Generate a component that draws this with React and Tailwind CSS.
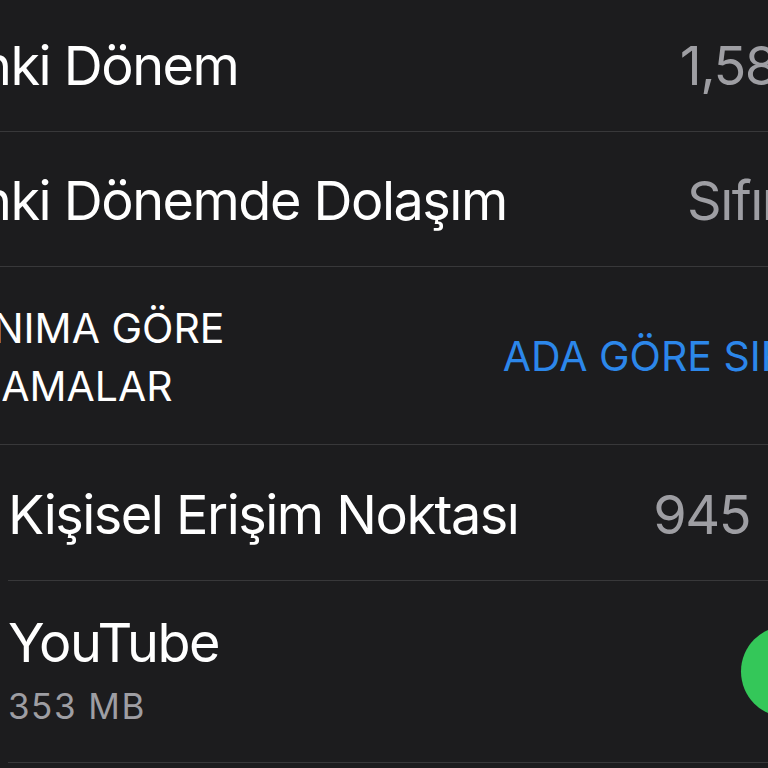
import React from "react";

const font = { fontFamily: "Inter, 'Noto Sans', sans-serif" };

// Satır: başlık solda, değer sağda
const ValueRow = ({ label, value }) => (
  <div className="flex h-[135px] items-center justify-between border-b border-[#38383a] pt-[4px] pr-[37px] whitespace-nowrap">
    <span className="pl-[67px] text-[54px] leading-none tracking-[-1.5px] text-white">{label}</span>
    <span className="text-[54px] leading-none tracking-[-1.5px] text-[#9e9ea3]">{value}</span>
  </div>
);

export default function App() {
  return (
    <div className="w-[768px] h-[768px] overflow-hidden bg-[#1c1c1e]" style={font}>
      <div className="-mt-[3px] -ml-[200px] w-[1100px]">
        <ValueRow label="Şu Anki Dönem" value="1,58 GB" />
        <ValueRow label="Şu Anki Dönemde Dolaşım" value="Sıfır KB" />

        {/* Bölüm başlığı */}
        <div className="flex h-[178px] items-center justify-between border-b border-[#38383a] pt-[2px] pr-[33px] whitespace-nowrap">
          <div className="pl-[60px] text-[41px] leading-[58px] text-white">
            <div>KULLANIMA GÖRE</div>
            <div>UYGULAMALAR</div>
          </div>
          <span className="text-[41px] leading-none text-[#2c87ea]">ADA GÖRE SIRALA</span>
        </div>

        {/* Uygulamalar */}
        <div className="pl-[208px] whitespace-nowrap">
          <div className="flex h-[136px] items-center border-b border-[#38383a] pt-[4px]">
            <span className="text-[54px] leading-none tracking-[-1.5px] text-white">Kişisel Erişim Noktası</span>
            <span className="ml-auto mr-[150px] text-[54px] leading-none tracking-[-1.5px] text-[#9e9ea3]">945</span>
          </div>
          <div className="flex h-[182px] items-center border-b border-[#38383a]">
            <div className="flex flex-col gap-[19px] pb-[4px]">
              <span className="text-[54px] leading-none tracking-[-1.5px] text-white">YouTube</span>
              <span className="text-[35px] leading-none tracking-[1.5px] text-[#9e9ea3]">353 MB</span>
            </div>
            <div className="ml-auto mr-[9px] flex h-[91px] w-[150px] justify-end rounded-full bg-[#34c759] p-[4px]">
              <div className="h-[83px] w-[83px] rounded-full bg-white" />
            </div>
          </div>
        </div>
      </div>
    </div>
  );
}
